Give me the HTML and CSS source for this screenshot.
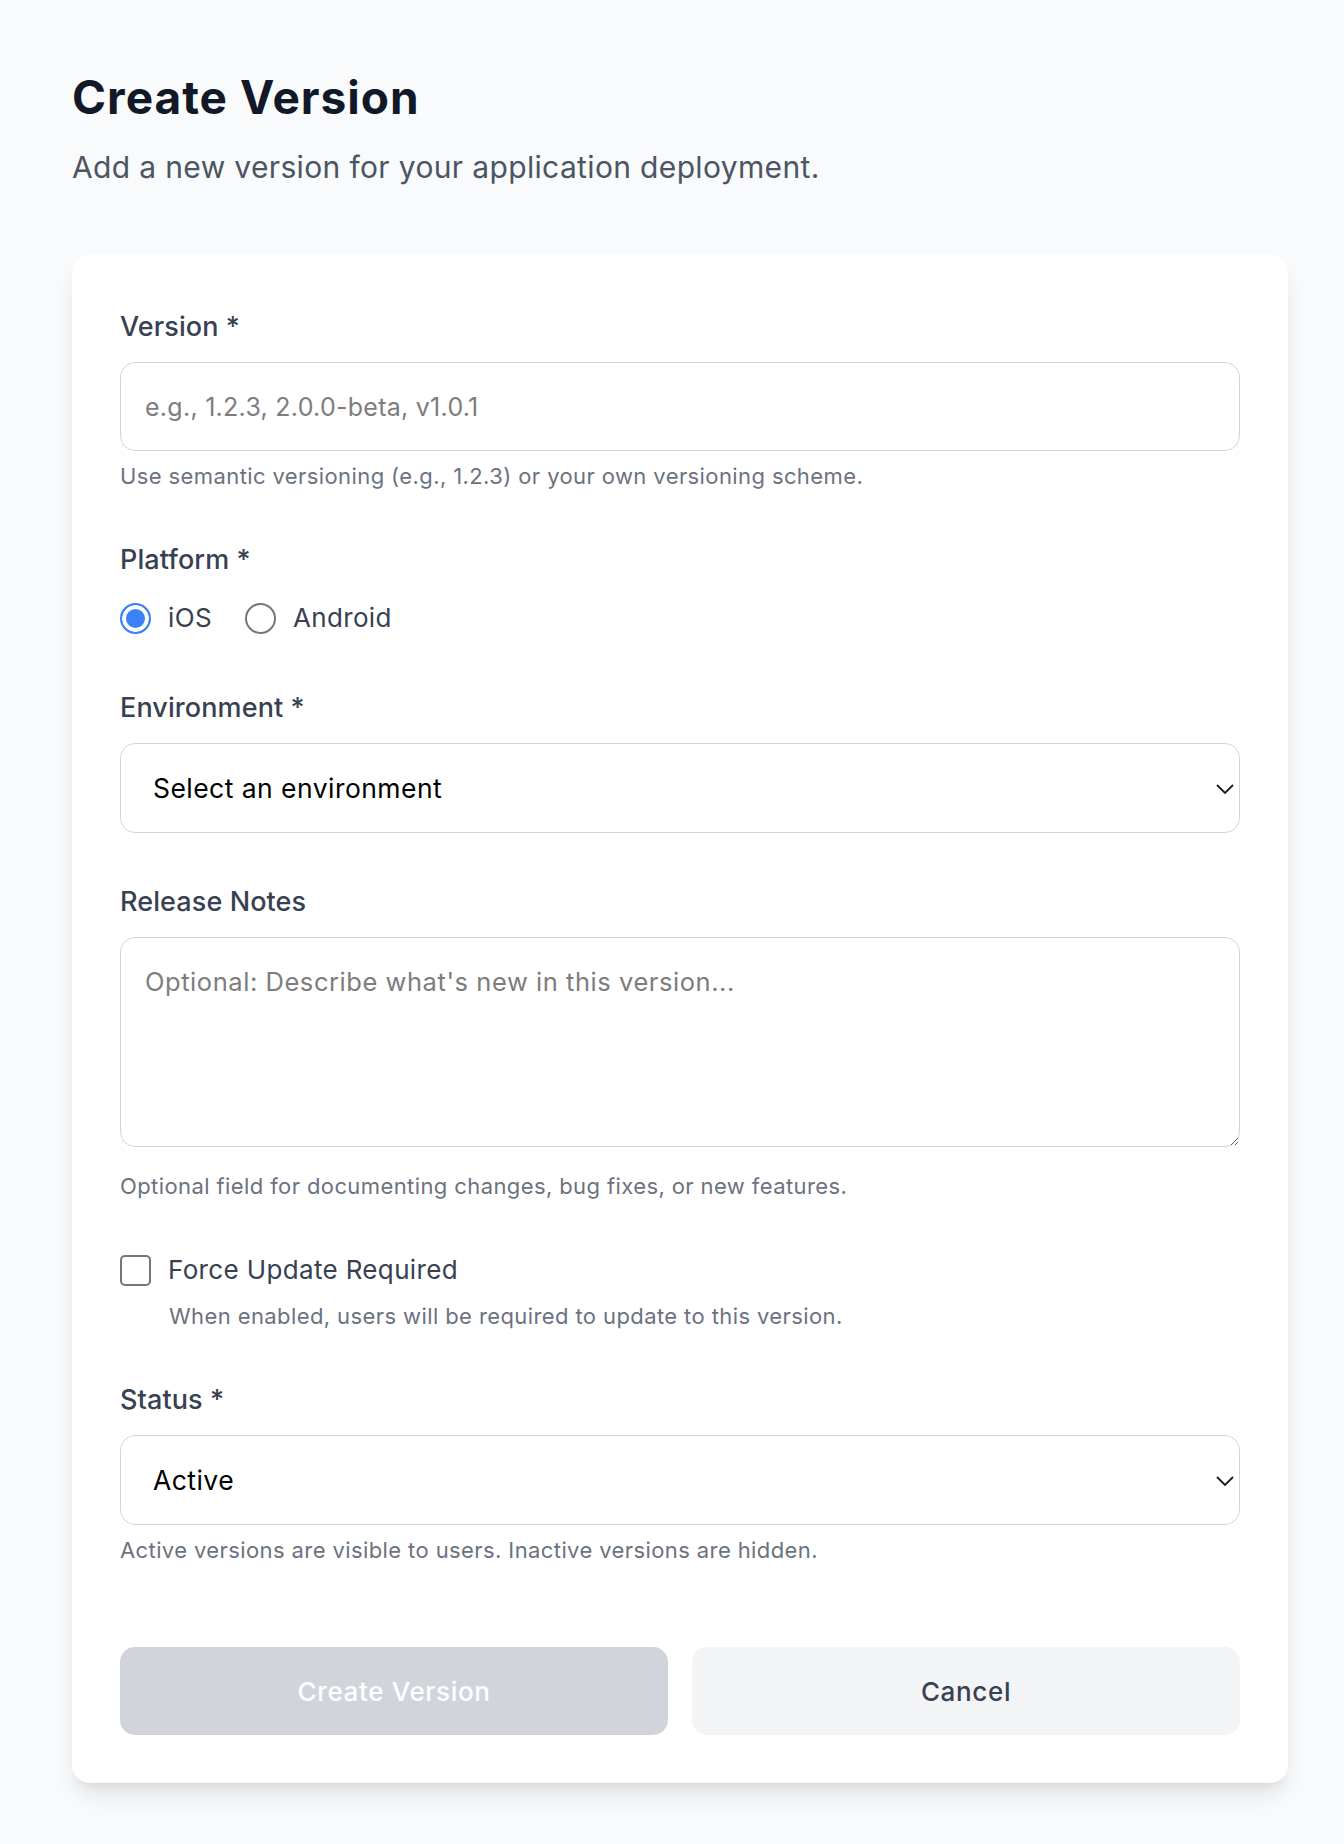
FILE: index.html
```html
<!DOCTYPE html>
<html lang="en">
<head>
<meta charset="utf-8">
<title>Create Version</title>
<link rel="stylesheet" href="styles.css">
</head>
<body>
<main class="page">
  <h1 class="title">Create Version</h1>
  <p class="subtitle">Add a new version for your application deployment.</p>

  <form class="card">
    <div class="field">
      <label class="label" for="version">Version *</label>
      <input class="input" id="version" type="text" placeholder="e.g., 1.2.3, 2.0.0-beta, v1.0.1">
      <p class="help">Use semantic versioning (e.g., 1.2.3) or your own versioning scheme.</p>
    </div>

    <div class="field">
      <span class="label">Platform *</span>
      <div class="radios">
        <label class="radio"><input class="radio-input" type="radio" name="platform" checked><span>iOS</span></label>
        <label class="radio"><input class="radio-input" type="radio" name="platform"><span>Android</span></label>
      </div>
    </div>

    <div class="field">
      <label class="label" for="env">Environment *</label>
      <div class="select-wrap">
        <select class="input select" id="env">
          <option>Select an environment</option>
          <option>Production</option>
          <option>Staging</option>
        </select>
        <svg class="chev" width="18" height="10" viewBox="0 0 18 10" aria-hidden="true"><path d="M1 1l8 8 8-8" fill="none" stroke="#1c1c1c" stroke-width="1.8"/></svg>
      </div>
    </div>

    <div class="field">
      <label class="label" for="notes">Release Notes</label>
      <textarea class="input textarea" id="notes" placeholder="Optional: Describe what's new in this version..."></textarea>
      <p class="help help-notes">Optional field for documenting changes, bug fixes, or new features.</p>
    </div>

    <div class="field">
      <label class="check"><input class="check-input" type="checkbox"><span>Force Update Required</span></label>
      <p class="help help-check">When enabled, users will be required to update to this version.</p>
    </div>

    <div class="field">
      <label class="label" for="status">Status *</label>
      <div class="select-wrap">
        <select class="input select" id="status">
          <option>Active</option>
          <option>Inactive</option>
        </select>
        <svg class="chev" width="18" height="10" viewBox="0 0 18 10" aria-hidden="true"><path d="M1 1l8 8 8-8" fill="none" stroke="#1c1c1c" stroke-width="1.8"/></svg>
      </div>
      <p class="help">Active versions are visible to users. Inactive versions are hidden.</p>
    </div>

    <div class="actions">
      <button class="btn btn-primary" type="button" disabled>Create Version</button>
      <button class="btn btn-secondary" type="button">Cancel</button>
    </div>
  </form>
</main>
</body>
</html>
```

FILE: styles.css
```css
html, body {
  margin: 0;
  background: #f9fafb;
}

body {
  font-family: Inter, "Noto Sans", "Liberation Sans", sans-serif;
  color: #111827;
}

.page {
  padding: 70px 56px 60px 72px;
}

.title {
  margin: 0;
  font-size: 46px;
  line-height: 54px;
  font-weight: 700;
  letter-spacing: 1px;
  color: #111827;
}

.subtitle {
  margin: 22px 0 0;
  font-size: 30px;
  line-height: 42px;
  letter-spacing: 0.35px;
  color: #4b5563;
}

.card {
  margin: 67px 0 0;
  background: #fff;
  border-radius: 18px;
  padding: 51px 48px 48px;
  box-shadow: 0 15px 22px -4px rgba(0, 0, 0, 0.1), 0 6px 9px -6px rgba(0, 0, 0, 0.1);
  display: flex;
  flex-direction: column;
  gap: 48px;
}

.field {
  display: flex;
  flex-direction: column;
}

.label {
  display: block;
  font-size: 27px;
  line-height: 42px;
  font-weight: 500;
  letter-spacing: 0.1px;
  color: #374151;
  margin-bottom: 14px;
}

.input {
  display: block;
  width: 100%;
  box-sizing: border-box;
  margin: 0;
  border: 1.5px solid #d1d5db;
  border-radius: 15px;
  background: #fff;
  font-family: inherit;
  font-size: 25px;
  letter-spacing: 0.27px;
  line-height: 36px;
  padding: 25.5px 24px;
  color: #111827;
  outline: none;
}

.input::placeholder {
  color: #7d7d7d;
  opacity: 1;
}

.select-wrap {
  position: relative;
}

.select {
  appearance: none;
  -webkit-appearance: none;
  padding-left: 32px;
  font-size: 26.5px;
  letter-spacing: 0.45px;
  color: #000;
  height: 90px;
}

.chev {
  position: absolute;
  right: 6px;
  top: 50%;
  margin-top: -4px;
  pointer-events: none;
}

.textarea {
  height: 210px;
  resize: both;
  font-size: 25.5px;
  letter-spacing: 0.55px;
}

.help {
  margin: 10px 0 0;
  font-size: 22px;
  line-height: 30px;
  letter-spacing: 0.4px;
  color: #6b7280;
}

.help-notes {
  margin-top: 24px;
}

.radios {
  display: flex;
  align-items: center;
  gap: 33px;
  height: 42px;
  padding-top: 2px;
}

.radio,
.check {
  display: flex;
  align-items: center;
  gap: 17px;
  font-size: 26px;
  line-height: 42px;
  letter-spacing: 0.35px;
  color: #374151;
}

.radio-input {
  appearance: none;
  -webkit-appearance: none;
  margin: 0;
  width: 31px;
  height: 31px;
  border-radius: 50%;
  border: 2px solid #767676;
  background: #fff;
  box-sizing: border-box;
}

.radio-input:checked {
  border: 2.5px solid #3b82f6;
  background: #3b82f6;
  box-shadow: inset 0 0 0 4px #fff;
}

.check-input {
  appearance: none;
  -webkit-appearance: none;
  margin: 0;
  width: 31px;
  height: 31px;
  border-radius: 5px;
  border: 2px solid #767676;
  background: #fff;
  box-sizing: border-box;
}

.help-check {
  margin-top: 10px;
  padding-left: 49px;
}

.actions {
  display: flex;
  gap: 24px;
  padding-top: 34px;
}

.btn {
  flex: 1;
  height: 88px;
  border: 0;
  border-radius: 15px;
  font-family: inherit;
  font-size: 26px;
  letter-spacing: 0.65px;
  font-weight: 500;
}

.btn-primary {
  background: #d1d5db;
  color: #fff;
}

.btn-secondary {
  background: #f3f4f6;
  color: #374151;
}
```
